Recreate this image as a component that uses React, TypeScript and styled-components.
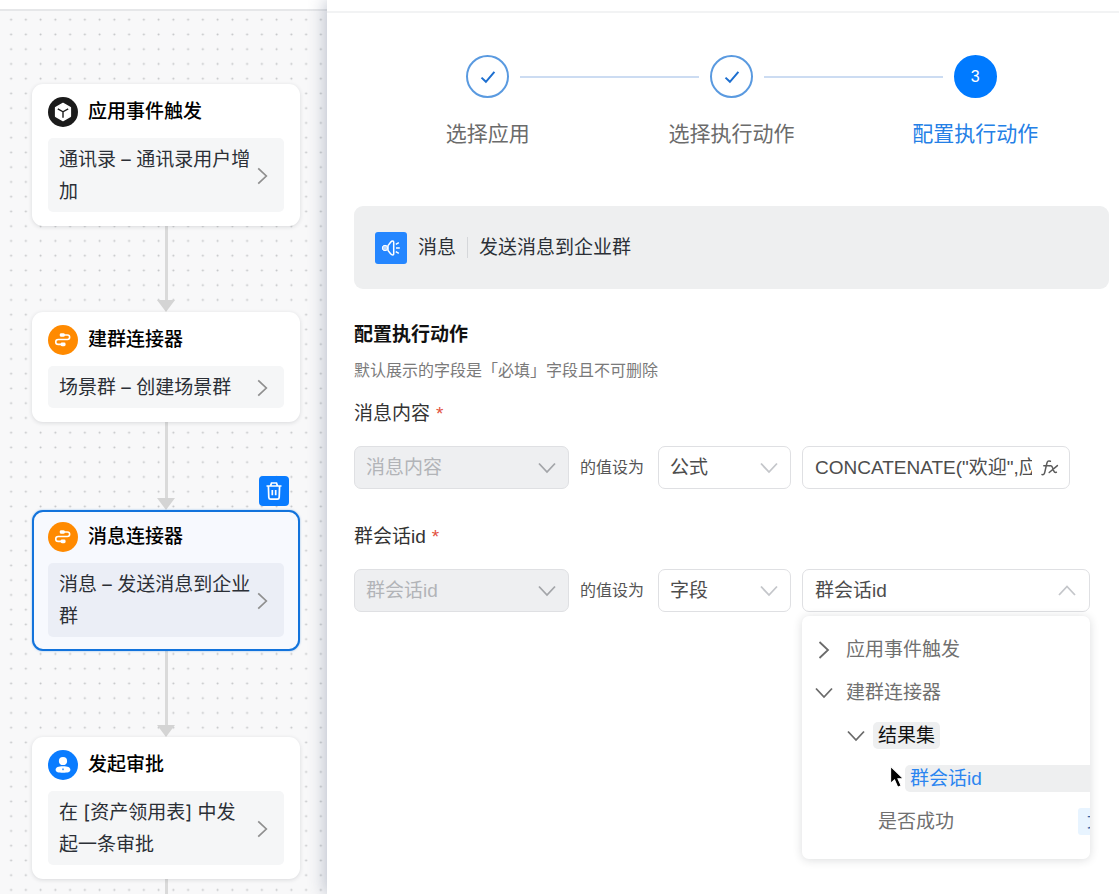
import React from "react";
import styled, { createGlobalStyle, css } from "styled-components";

const GlobalStyle = createGlobalStyle`
  *, *::before, *::after { box-sizing: border-box; }
  body {
    margin: 0;
    background: #fff;
    color: #1f2329;
    font-family: "Liberation Sans", "Noto Sans CJK SC", sans-serif;
    font-size: 19px;
  }
  button, input, select { font: inherit; color: inherit; }
  h2, h3, p, ol, ul { margin: 0; padding: 0; }
  ol, ul { list-style: none; }
`;

const Page = styled.div`
  display: flex;
  min-height: 100vh;
`;

/* ---------- Flow canvas ---------- */

const Canvas = styled.section`
  position: relative;
  flex: 0 0 327px;
  display: flex;
  flex-direction: column;
  background: #f8f8f9;
  overflow: hidden;
`;

const Dots = styled.svg`
  position: absolute;
  inset: 11px 0 0;
  width: 100%;
  height: 100%;
`;

const CanvasBar = styled.div`
  height: 11px;
  background: #fff;
  border-bottom: 2px solid #e6e7e9;
`;

const Flow = styled.div`
  position: relative;
  flex: 1;
  display: flex;
  flex-direction: column;
  padding: 73px 27px 0 32px;
`;

const Card = styled.article<{ $selected?: boolean }>`
  position: relative;
  display: flex;
  flex-direction: column;
  gap: 11px;
  padding: 11px 14px 12px;
  border: 2px solid transparent;
  border-radius: 11px;
  background: #fff;
  background-clip: border-box;
  box-shadow: 0 1px 4px rgba(31, 35, 41, 0.14);
  ${(p) =>
    p.$selected &&
    css`
      padding-top: 10px;
      border-color: #1273dc;
      background: #f7f9fe;
      box-shadow: 0 0 2px rgba(18, 115, 220, 0.5);
    `}
`;

const CardHead = styled.header`
  display: flex;
  align-items: center;
  gap: 10px;
  height: 30px;
`;

const CardTitle = styled.h3`
  font-size: 19px;
  line-height: 28px;
  font-weight: 500;
  color: #000;
`;

const CardBody = styled.button<{ $selected?: boolean }>`
  display: flex;
  align-items: center;
  justify-content: space-between;
  padding: 6px 12px 4px 11px;
  border: 0;
  border-radius: 5px;
  background: ${(p) => (p.$selected ? "#ebeef6" : "#f5f6f7")};
  font-family: Inter, "Noto Sans CJK SC", sans-serif;
  line-height: 32px;
  text-align: left;
  color: #2b2f36;
`;

const CardText = styled.span`
  flex: 0 0 194px;
  white-space: pre-line;
`;

const Connector = styled.div<{ $height?: number }>`
  display: flex;
  flex-direction: column;
  align-items: center;
  ${(p) => (p.$height ? `height: ${p.$height}px;` : "flex: 1;")}
  &::before {
    content: "";
    flex: 1;
    width: 3px;
    background: #dadada;
  }
`;

const ArrowHead = styled.i`
  border: 9px solid transparent;
  border-top: 12px solid #d4d4d4;
  border-bottom: 0;
`;

const DeleteButton = styled.button`
  position: absolute;
  right: 9px;
  top: -36px;
  display: grid;
  place-items: center;
  width: 30px;
  height: 30px;
  padding: 0;
  border: 0;
  border-radius: 4px;
  background: #0a7cff;
`;

/* ---------- Side panel ---------- */

const Panel = styled.main`
  position: relative;
  flex: 1;
  min-width: 0;
  background: #fff;
  box-shadow: -2px 0 16px rgba(60, 75, 110, 0.32);
`;

const PanelBar = styled.div`
  height: 13px;
  border-bottom: 2px solid #f2f3f4;
`;

const PanelBody = styled.div`
  padding: 42px 10px 24px 27px;
`;

const Steps = styled.ol`
  display: grid;
  grid-template-columns: repeat(3, 1fr);
  padding: 0 12px;
`;

const Step = styled.li<{ $active?: boolean }>`
  display: flex;
  flex-direction: column;
  gap: 20px;
  font-size: 21px;
  line-height: 32px;
  text-align: center;
  color: ${(p) => (p.$active ? "#2480e6" : "#6b6b6b")};
`;

const StepTrack = styled.div`
  display: flex;
  align-items: center;
  gap: 11px;
`;

const StepLine = styled.span<{ $hidden?: boolean }>`
  flex: 1;
  height: 2px;
  background: ${(p) => (p.$hidden ? "transparent" : "#ccdcf2")};
`;

const StepCircle = styled.span<{ $active?: boolean }>`
  display: grid;
  place-items: center;
  width: 43px;
  height: 43px;
  border: 2px solid ${(p) => (p.$active ? "#007aff" : "#5a9ae0")};
  border-radius: 50%;
  background: ${(p) => (p.$active ? "#007aff" : "#fff")};
  color: #fff;
  font-size: 16px;
`;

const Banner = styled.section`
  display: flex;
  align-items: center;
  gap: 11px;
  height: 83px;
  margin-top: 56px;
  padding: 0 21px;
  border-radius: 9px;
  background: #eeeff0;
  line-height: 28px;
  color: #2b2f36;
`;

const BannerIcon = styled.span`
  display: grid;
  place-items: center;
  width: 32px;
  height: 32px;
  border-radius: 3px;
  background: #2486ff;
`;

const BannerDivider = styled.i`
  width: 1px;
  height: 21px;
  background: #d5d7da;
`;

const Heading = styled.h2`
  margin-top: 32px;
  font-size: 19px;
  line-height: 28px;
  font-weight: 700;
  color: #111;
`;

const Hint = styled.p`
  margin-top: 10px;
  font-size: 16px;
  line-height: 24px;
  color: #7a7a7a;
`;

const Form = styled.form`
  display: flex;
  flex-direction: column;
  gap: 34px;
  margin-top: 17px;
`;

const Field = styled.div`
  display: flex;
  flex-direction: column;
  gap: 18px;
`;

const FieldLabel = styled.label`
  line-height: 28px;
  color: #333;
`;

const Required = styled.span`
  margin-left: 6px;
  color: #e25241;
`;

const FieldRow = styled.div`
  display: flex;
  align-items: center;
  gap: 11px;
`;

const Joiner = styled.span`
  flex: none;
  width: 67px;
  font-size: 16px;
  line-height: 24px;
  color: #555;
`;

const SelectWrap = styled.span<{ $width: number }>`
  position: relative;
  flex: 0 1 ${(p) => p.$width}px;
  min-width: 0;
  display: flex;
  align-items: center;
  & > svg {
    position: absolute;
    right: 12px;
    pointer-events: none;
  }
`;

const controlBox = css`
  height: 43px;
  border: 1px solid #dfe0e3;
  border-radius: 7px;
  background: #fff;
  color: #4d4d4d;
`;

const Select = styled.select`
  ${controlBox}
  width: 100%;
  padding: 0 11px;
  appearance: none;
  &:disabled {
    background: #eeeff1;
    border-color: #dfe0e3;
    color: #b2b4b8;
    opacity: 1;
  }
`;

const FormulaBox = styled.span`
  ${controlBox}
  flex: 0 1 268px;
  min-width: 0;
  display: flex;
  align-items: center;
  gap: 9px;
  padding: 0 10px 0 12px;
`;

const FormulaInput = styled.input`
  flex: 1;
  min-width: 0;
  height: 38px;
  padding: 0 0 4px;
  border: 0;
  outline: 0;
  background: transparent;
`;

const IconButton = styled.button`
  display: grid;
  place-items: center;
  padding: 0;
  border: 0;
  background: transparent;
`;

const Picker = styled.div`
  position: relative;
  flex: 0 1 288px;
  min-width: 0;
`;

const PickerButton = styled.button`
  ${controlBox}
  display: flex;
  align-items: center;
  justify-content: space-between;
  width: 100%;
  padding: 0 12px;
  line-height: 28px;
`;

const Menu = styled.div`
  position: absolute;
  top: 47px;
  left: 0;
  right: 0;
  padding: 12px 0 16px;
  border-radius: 7px;
  background: #fff;
  box-shadow: 0 1px 10px rgba(31, 35, 41, 0.16);
  overflow: hidden;
`;

const Tree = styled.ul`
  width: calc(100% + 38px);
`;

const TreeRow = styled.li<{ $level: number; $leaf?: boolean }>`
  position: relative;
  display: flex;
  align-items: center;
  gap: 7px;
  height: 43px;
  padding-left: ${(p) => (p.$leaf ? 7 : 12) + p.$level * 32}px;
`;

const Toggle = styled(IconButton)`
  width: 20px;
  height: 20px;
`;

const TreeLabel = styled.button<{ $tone?: "hover" | "chosen" }>`
  flex: ${(p) => (p.$tone === "chosen" ? "1" : "none")};
  height: 27px;
  padding: 0 5px;
  border: 0;
  border-radius: 5px;
  line-height: 27px;
  text-align: left;
  background: ${(p) => (p.$tone ? "#eeeff0" : "transparent")};
  color: ${(p) => (p.$tone === "chosen" ? "#2b85f0" : p.$tone ? "#111" : "#707070")};
`;

const TypeTag = styled.span`
  margin-left: auto;
  padding: 0 9px;
  border-radius: 3px;
  background: #e8f4ff;
  color: #3563a8;
  font-size: 16px;
  line-height: 27px;
`;

const Pointer = styled.svg`
  position: absolute;
  left: 87px;
  top: 8px;
`;

/* ---------- Icons ---------- */

type Dir = "right" | "down" | "up";

const chevronPaths: Record<Dir, string> = {
  right: "M5.5 2l8.5 8-8.5 8",
  down: "M2 5.5l8 8.5 8-8.5",
  up: "M2 14l8-8.5 8 8.5",
};

function Chevron({ dir, color }: { dir: Dir; color: string }) {
  return (
    <svg width="20" height="20" viewBox="0 0 20 20" fill="none" stroke={color} strokeWidth="1.8" aria-hidden="true">
      <path d={chevronPaths[dir]} />
    </svg>
  );
}

function CubeIcon() {
  return (
    <svg width="30" height="30" viewBox="0 0 30 30" aria-hidden="true">
      <circle cx="15" cy="15" r="15" fill="#1b1b1b" />
      <path d="M15 6.4l7.4 4.3v8.6L15 23.6l-7.4-4.3v-8.6z" fill="#fff" stroke="#fff" strokeWidth="1.4" strokeLinejoin="round" />
      <path d="M9.8 11.8l5.2 3 5.2-3M15 14.8v6" fill="none" stroke="#1b1b1b" strokeWidth="1.4" />
    </svg>
  );
}

function LinkIcon() {
  return (
    <svg width="30" height="30" viewBox="0 0 30 30" aria-hidden="true">
      <circle cx="15" cy="15" r="15" fill="#ff8a00" />
      <path
        d="M14.5 10h4.9a2.2 2.2 0 0 1 0 4.5H10.2a2.4 2.4 0 0 0 0 4.9h4.5"
        fill="none"
        stroke="#fff"
        strokeWidth="1.6"
      />
      <rect x="11.8" y="8.2" width="5" height="3.6" rx="1.4" fill="#fff" />
      <rect x="12.6" y="17.6" width="5" height="3.6" rx="1.4" fill="#fff" />
    </svg>
  );
}

function PersonIcon() {
  return (
    <svg width="30" height="30" viewBox="0 0 30 30" aria-hidden="true">
      <circle cx="15" cy="15" r="15" fill="#0a7cff" />
      <circle cx="15" cy="11" r="4.1" fill="#fff" />
      <path d="M7.6 19.7c0-2.4 2.8-3.5 7.4-3.5s7.4 1.1 7.4 3.5-2.8 3-7.4 3-7.4-.6-7.4-3z" fill="#fff" />
      <path d="M15 17.8l.8 1.8-.8 1-.8-1z" fill="#0a7cff" />
    </svg>
  );
}

function TrashIcon() {
  return (
    <svg width="18" height="20" viewBox="0 0 18 20" fill="none" stroke="#fff" strokeWidth="1.7" aria-hidden="true">
      <path d="M1.5 5h15M5.6 4.6L6.5 2h5l.9 2.6M3.4 5l.4 11.4a1.8 1.8 0 0 0 1.8 1.7h6.8a1.8 1.8 0 0 0 1.8-1.7L14.6 5M7.3 9v5.2M10.7 9v5.2" />
    </svg>
  );
}

function MegaphoneIcon() {
  return (
    <svg width="20" height="20" viewBox="0 0 20 20" fill="none" stroke="#fff" strokeWidth="1.5" aria-hidden="true">
      <path d="M7 7.6l2.6-3.4c.7-.9 1.3-1.2 2.2-1.2.6 0 .9.4.9 1v12c0 .6-.3 1-.9 1-.9 0-1.5-.3-2.2-1.2L7 12.4z" />
      <path d="M14.8 6.4l3-1.8M15 10h3.8M14.8 13.6l3 1.8" />
      <circle cx="4" cy="10" r="2.7" fill="#b9d8ff" stroke="#fff" strokeWidth="1" />
    </svg>
  );
}

function CheckIcon() {
  return (
    <svg width="16" height="16" viewBox="0 0 16 16" fill="none" stroke="#1d6fd0" strokeWidth="2" aria-hidden="true">
      <path d="M1.5 8.6l4.4 4.2L14.4 2.8" />
    </svg>
  );
}

function FxIcon() {
  return (
    <svg width="18" height="18" viewBox="0 0 18 18" fill="none" stroke="#5a5a5a" strokeWidth="1.5" strokeLinecap="round" aria-hidden="true">
      <path d="M1 15.6c1.6.4 2.4-.6 2.8-2.4L5.9 4.2C6.4 2.2 7.4 1.6 9.4 2.2M2.8 6.8h5.6" />
      <path d="M9 6.8c1.6-.4 2 .4 2.5 1.8l1.3 3.4c.5 1.3 1.2 1.7 2.6 1.3M16.4 6.6L8.2 13.5" />
    </svg>
  );
}

/* ---------- Composed parts ---------- */

function FlowCard({
  icon,
  title,
  text,
  selected,
}: {
  icon: React.ReactNode;
  title: string;
  text: string;
  selected?: boolean;
}) {
  return (
    <Card $selected={selected}>
      <CardHead>
        {icon}
        <CardTitle>{title}</CardTitle>
      </CardHead>
      <CardBody type="button" $selected={selected}>
        <CardText>{text}</CardText>
        <Chevron dir="right" color="#8f8f8f" />
      </CardBody>
      {selected && (
        <DeleteButton type="button" aria-label="删除">
          <TrashIcon />
        </DeleteButton>
      )}
    </Card>
  );
}

function Arrow({ height }: { height: number }) {
  return (
    <Connector $height={height}>
      <ArrowHead />
    </Connector>
  );
}

function DropDown({
  value,
  width,
  disabled,
  label,
}: {
  value: string;
  width: number;
  disabled?: boolean;
  label: string;
}) {
  return (
    <SelectWrap $width={width}>
      <Select disabled={disabled} aria-label={label} defaultValue={value}>
        <option>{value}</option>
      </Select>
      <Chevron dir="down" color={disabled ? "#a3a5a9" : "#c4c6ca"} />
    </SelectWrap>
  );
}

export default function App() {
  return (
    <>
      <GlobalStyle />
      <Page>
        <Canvas>
          <Dots aria-hidden="true">
            <defs>
              <pattern id="dots" width="14.75" height="14.75" patternUnits="userSpaceOnUse" x="3.7" y="1.3">
                <circle cx="7.4" cy="7.4" r="1" fill="#c2c3c5" />
              </pattern>
            </defs>
            <rect width="100%" height="100%" fill="url(#dots)" />
          </Dots>
          <CanvasBar />
          <Flow>
            <FlowCard icon={<CubeIcon />} title="应用事件触发" text={"通讯录 – 通讯录用户增\n加"} />
            <Arrow height={86} />
            <FlowCard icon={<LinkIcon />} title="建群连接器" text="场景群 – 创建场景群" />
            <Arrow height={88} />
            <FlowCard icon={<LinkIcon />} title="消息连接器" text={"消息 – 发送消息到企业\n群"} selected />
            <Arrow height={86} />
            <FlowCard icon={<PersonIcon />} title="发起审批" text={"在 [资产领用表] 中发\n起一条审批"} />
            <Connector />
          </Flow>
        </Canvas>

        <Panel>
          <PanelBar />
          <PanelBody>
            <Steps>
              <Step>
                <StepTrack>
                  <StepLine $hidden />
                  <StepCircle><CheckIcon /></StepCircle>
                  <StepLine />
                </StepTrack>
                选择应用
              </Step>
              <Step>
                <StepTrack>
                  <StepLine />
                  <StepCircle><CheckIcon /></StepCircle>
                  <StepLine />
                </StepTrack>
                选择执行动作
              </Step>
              <Step $active aria-current="step">
                <StepTrack>
                  <StepLine />
                  <StepCircle $active>3</StepCircle>
                  <StepLine $hidden />
                </StepTrack>
                配置执行动作
              </Step>
            </Steps>

            <Banner>
              <BannerIcon><MegaphoneIcon /></BannerIcon>
              <span>消息</span>
              <BannerDivider />
              <span>发送消息到企业群</span>
            </Banner>

            <Heading>配置执行动作</Heading>
            <Hint>默认展示的字段是「必填」字段且不可删除</Hint>

            <Form>
              <Field>
                <FieldLabel htmlFor="content-value">
                  消息内容<Required>*</Required>
                </FieldLabel>
                <FieldRow>
                  <DropDown value="消息内容" width={215} disabled label="字段" />
                  <Joiner>的值设为</Joiner>
                  <DropDown value="公式" width={133} label="取值方式" />
                  <FormulaBox>
                    <FormulaInput id="content-value" type="text" defaultValue={'CONCATENATE("欢迎",应'} />
                    <IconButton type="button" aria-label="编辑公式">
                      <FxIcon />
                    </IconButton>
                  </FormulaBox>
                </FieldRow>
              </Field>

              <Field>
                <FieldLabel htmlFor="chat-value">
                  群会话id<Required>*</Required>
                </FieldLabel>
                <FieldRow>
                  <DropDown value="群会话id" width={215} disabled label="字段" />
                  <Joiner>的值设为</Joiner>
                  <DropDown value="字段" width={133} label="取值方式" />
                  <Picker>
                    <PickerButton id="chat-value" type="button" aria-haspopup="tree" aria-expanded="true">
                      群会话id
                      <Chevron dir="up" color="#c4c6ca" />
                    </PickerButton>
                    <Menu>
                      <Tree role="tree">
                        <TreeRow role="treeitem" aria-expanded="false" $level={0}>
                          <Toggle type="button" aria-label="展开">
                            <Chevron dir="right" color="#6b6b6b" />
                          </Toggle>
                          <TreeLabel type="button">应用事件触发</TreeLabel>
                        </TreeRow>
                        <TreeRow role="treeitem" aria-expanded="true" $level={0}>
                          <Toggle type="button" aria-label="收起">
                            <Chevron dir="down" color="#6b6b6b" />
                          </Toggle>
                          <TreeLabel type="button">建群连接器</TreeLabel>
                        </TreeRow>
                        <TreeRow role="treeitem" aria-expanded="true" $level={1}>
                          <Toggle type="button" aria-label="收起">
                            <Chevron dir="down" color="#6b6b6b" />
                          </Toggle>
                          <TreeLabel type="button" $tone="hover">结果集</TreeLabel>
                        </TreeRow>
                        <TreeRow role="treeitem" aria-selected="true" $level={3} $leaf>
                          <Pointer width="16" height="25" viewBox="0 0 15 23" aria-hidden="true">
                            <path
                              d="M1.5 1v16l3.7-3.3 3 7 3.2-1.4-3-6.7h5z"
                              fill="#000"
                              stroke="#fff"
                              strokeWidth="1"
                            />
                          </Pointer>
                          <TreeLabel type="button" $tone="chosen">群会话id</TreeLabel>
                        </TreeRow>
                        <TreeRow role="treeitem" $level={2} $leaf>
                          <TreeLabel type="button">是否成功</TreeLabel>
                          <TypeTag>文本</TypeTag>
                        </TreeRow>
                      </Tree>
                    </Menu>
                  </Picker>
                </FieldRow>
              </Field>
            </Form>
          </PanelBody>
        </Panel>
      </Page>
    </>
  );
}
